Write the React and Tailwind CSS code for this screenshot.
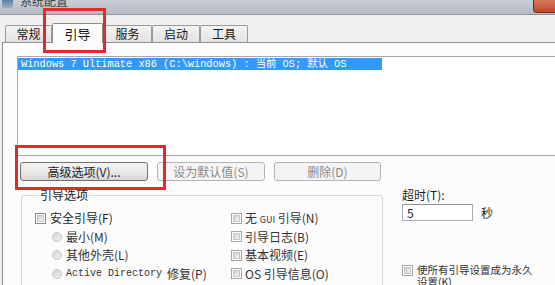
import React from "react";

const Check = ({ light }) => (
  <div className={`w-[11px] h-[11px] shrink-0 border ${light ? "border-[#a8a8a8]" : "border-[#8a8a8a]"} bg-white p-[1px]`}>
    <div className="w-full h-full bg-gradient-to-br from-[#cfcfcf] to-[#f4f4f4] border border-[#c6c6c6]" />
  </div>
);

const Radio = () => (
  <div className="w-[10px] h-[10px] shrink-0 rounded-full border border-[#c4c4c4] bg-gradient-to-br from-[#d4d4d4] to-[#f2f2f2]" />
);

const Tab = ({ children, w }) => (
  <div className={`${w} h-[17px] shrink-0 border border-b-0 border-[#9a9a9a] rounded-t-[2px] bg-gradient-to-b from-[#f3f3f3] to-[#e2e2e2] flex items-center justify-center text-[12px] leading-none text-[#1a1a1a]`}>
    {children}
  </div>
);

export default function App() {
  return (
    <div className="w-[555px] h-[285px] overflow-hidden relative bg-[#f0f0f0] flex flex-col font-['Noto_Sans_CJK_SC',sans-serif] text-[12px] text-[#1e1e1e]">
      {/* title bar */}
      <div className="h-[15px] shrink-0 flex bg-gradient-to-b from-[#c9cfd5] to-[#b4bbc2] border-b border-[#8d949a] overflow-hidden">
        <div className="ml-[2px] w-[11px] h-[8px] bg-gradient-to-b from-[#5d7fa5] to-[#9bb3cc] rounded-b-[2px]" />
        <div className="ml-[7px] -mt-[6px] leading-[14px] text-[12px] text-[#3a3f44]">系统配置</div>
        <div className="flex-1" />
        <div className="w-[22px] h-[13px] rounded-bl-[4px] border border-t-0 border-r-0 border-[#7a2a1a] bg-gradient-to-b from-[#d9775f] to-[#c2452a]" />
      </div>

      {/* tabs */}
      <div className="h-[27px] shrink-0 flex items-end pl-[5px]">
        <Tab w="w-[47px]">常规</Tab>
        <div className="w-[51px] h-[20px] -mb-[1px] relative z-10 shrink-0 border border-b-0 border-[#8e8e8e] rounded-t-[2px] bg-[#fcfcfc] flex items-center justify-center text-[13px] leading-none text-[#111]">
          引导
        </div>
        <Tab w="w-[49px]">服务</Tab>
        <Tab w="w-[48px]">启动</Tab>
        <Tab w="w-[48px]">工具</Tab>
      </div>

      {/* panel */}
      <div className="flex-1 ml-[2px] bg-[#fcfcfc] border-t border-l border-[#8e9196] pl-[14px] pt-[13px] flex flex-col">
        {/* list */}
        <div className="w-[600px] h-[100px] shrink-0 border border-[#a3a9b0] bg-white pt-[1px]">
          <div className="w-[364px] h-[12px] bg-[#3399ff] text-white font-['Liberation_Mono','Noto_Sans_CJK_SC',monospace] text-[10.3px] leading-[12px] pl-[3px] whitespace-nowrap overflow-hidden">
            Windows 7 Ultimate x86 (C:\windows) : 当前 OS; 默认 OS
          </div>
        </div>

        {/* buttons */}
        <div className="mt-[6px] ml-[3px] flex gap-[9px] shrink-0">
          <div className="w-[128px] h-[19px] border border-[#707070] rounded-[3px] bg-gradient-to-b from-[#f4f4f4] via-[#e9e9e9] to-[#d6d6d6] flex items-center justify-center text-[12px] leading-none text-[#1a1a1a]">
            高级选项(V)...
          </div>
          <div className="w-[108px] h-[19px] border border-[#b0b4b8] rounded-[3px] bg-[#f4f4f4] flex items-center justify-center text-[12px] leading-none text-[#8a8a8a]">
            设为默认值(S)
          </div>
          <div className="w-[107px] h-[19px] border border-[#b0b4b8] rounded-[3px] bg-[#f4f4f4] flex items-center justify-center text-[12px] leading-none text-[#8a8a8a]">
            删除(D)
          </div>
        </div>

        {/* options row */}
        <div className="mt-[8px] flex shrink-0">
          <fieldset className="ml-[4px] w-[362px] h-[120px] border border-[#d3dbe1] rounded-[3px] pl-[13px] pt-[8px]">
            <legend className="ml-[4px] px-[1px] leading-[12px] text-[12px] text-[#1a1a1a]">引导选项</legend>
            <div className="flex">
              <div className="w-[196px] flex flex-col">
                <div className="h-[18.5px] flex items-center gap-[4px]">
                  <Check />
                  <span className="leading-none">安全引导(F)</span>
                </div>
                <div className="h-[18.5px] flex items-center gap-[4px] pl-[17px] text-[#333]">
                  <Radio />
                  <span className="leading-none">最小(M)</span>
                </div>
                <div className="h-[18.5px] flex items-center gap-[4px] pl-[17px] text-[#333]">
                  <Radio />
                  <span className="leading-none">其他外壳(L)</span>
                </div>
                <div className="h-[18.5px] flex items-center gap-[4px] pl-[17px] text-[#333] whitespace-nowrap">
                  <Radio />
                  <span className="leading-none font-['Liberation_Mono',monospace] text-[10px] pt-[1px]">Active Directory</span>
                  <span className="leading-none ml-[1px]">修复(P)</span>
                </div>
              </div>
              <div className="flex flex-col text-[#333]">
                <div className="h-[18.5px] flex items-center gap-[3px] whitespace-nowrap">
                  <Check light />
                  <span className="leading-none">无 <span className="text-[9px]">GUI</span> 引导(N)</span>
                </div>
                <div className="h-[18.5px] flex items-center gap-[3px]">
                  <Check light />
                  <span className="leading-none">引导日志(B)</span>
                </div>
                <div className="h-[18.5px] flex items-center gap-[3px]">
                  <Check light />
                  <span className="leading-none">基本视频(E)</span>
                </div>
                <div className="h-[18.5px] flex items-center gap-[3px]">
                  <Check light />
                  <span className="leading-none">OS 引导信息(O)</span>
                </div>
              </div>
            </div>
          </fieldset>

          <div className="ml-[19px] flex flex-col">
            <div className="leading-[12px]">超时(T):</div>
            <div className="mt-[3px] flex items-center">
              <div className="w-[71px] h-[17px] border border-[#abadb3] border-t-[#8e9197] bg-white pl-[4px] text-[12px] leading-[15px]">5</div>
              <span className="ml-[8px] leading-none">秒</span>
            </div>
            <div className="mt-[43px] flex gap-[4px]">
              <div className="mt-[1px]"><Check light /></div>
              <div className="w-[120px] leading-[12px] text-[10.5px] text-[#333]">使所有引导设置成为永久设置(K)</div>
            </div>
          </div>
        </div>
      </div>

      {/* annotation boxes */}
      <div className="absolute left-[43px] top-[8px] w-[63px] h-[45px] border-[3px] border-[#e4282c]" />
      <div className="absolute left-[15px] top-[145px] w-[151px] h-[45px] border-[3px] border-[#e4282c]" />
    </div>
  );
}
